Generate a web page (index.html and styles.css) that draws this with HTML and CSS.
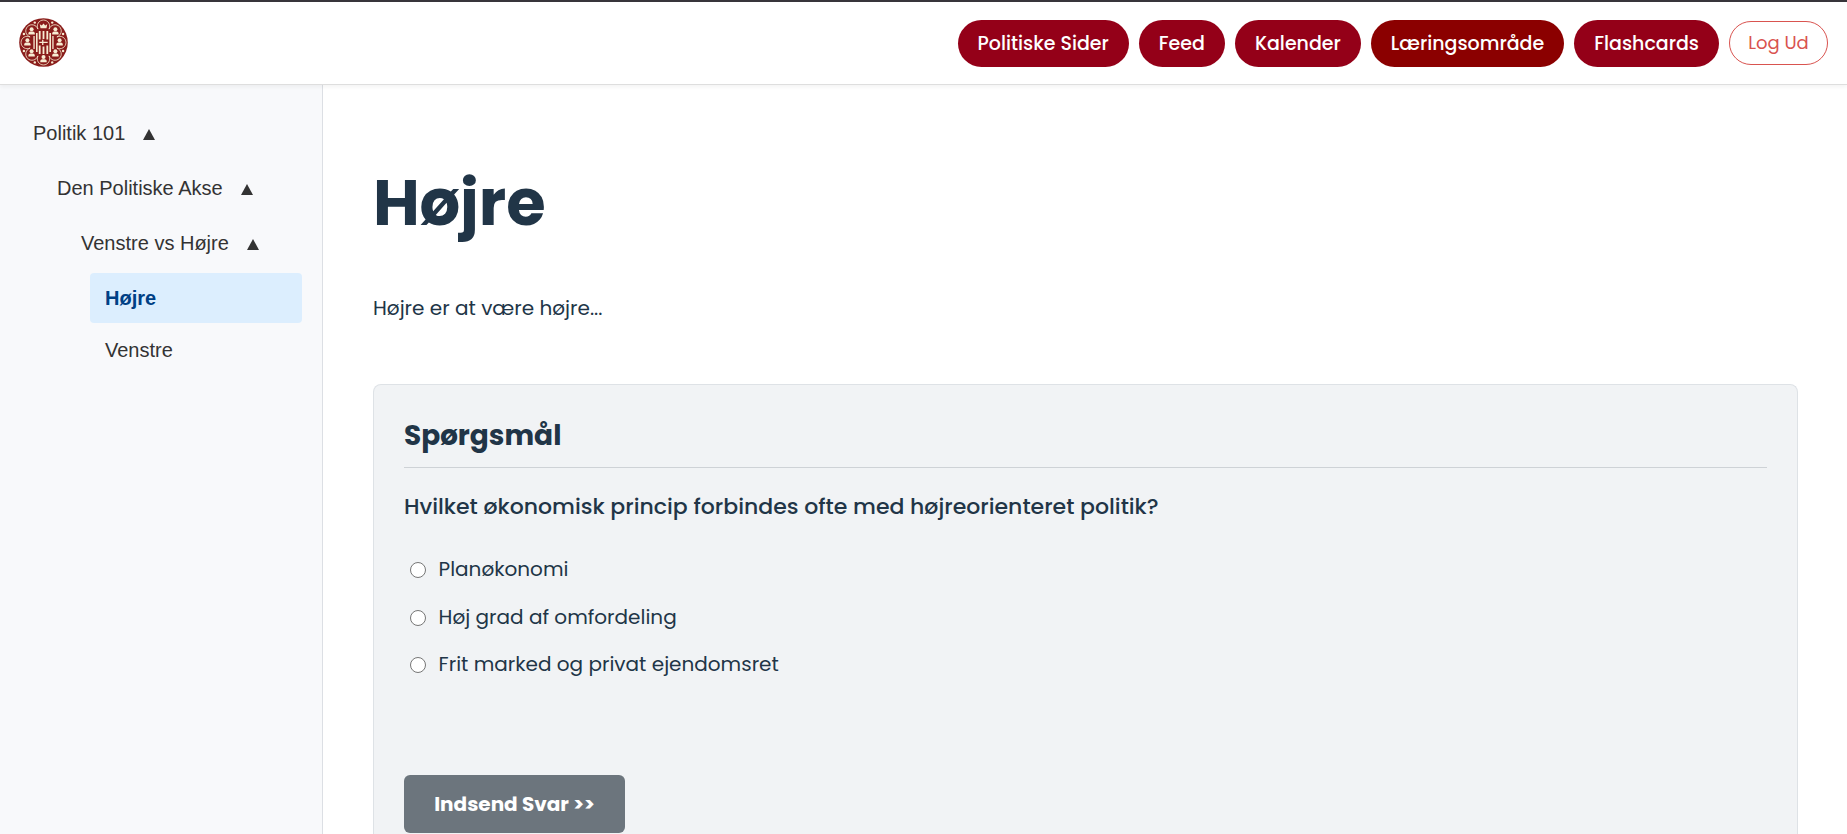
FILE: index.html
```html
<!DOCTYPE html>
<html lang="da">
<head>
<meta charset="utf-8">
<title>Læringsområde</title>
<link rel="stylesheet" href="styles.css">
</head>
<body>
<header class="topbar">
  <svg class="logo" viewBox="0 0 49 49" aria-label="Logo">
    <defs>
      <g id="person"><circle r="2" cy="-1.8"/><path d="M-3.2 3.4V2Q-2.8 .6-1.4 .4H1.4Q2.8 .6 3.2 2V3.4Z"/></g>
      <path id="foil" d="M-5.5 2.1A6.2 6.2 0 1 1 5.5 2.1"/>
    </defs>
    <circle cx="24.5" cy="24.5" r="24.3" fill="#8a1d1b"/>
    <g fill="none" stroke="#f7ecd2" stroke-width=".8">
      <use href="#foil" transform="translate(24.5 9)"/>
      <use href="#foil" transform="translate(35.5 13.5) rotate(45)"/>
      <use href="#foil" transform="translate(40 24.5) rotate(90)"/>
      <use href="#foil" transform="translate(35.5 35.5) rotate(135)"/>
      <use href="#foil" transform="translate(24.5 40) rotate(180)"/>
      <use href="#foil" transform="translate(13.5 35.5) rotate(225)"/>
      <use href="#foil" transform="translate(9 24.5) rotate(270)"/>
      <use href="#foil" transform="translate(13.5 13.5) rotate(315)"/>
    </g>
    <g fill="#f7ecd2">
      <use href="#person" x="12.6" y="13"/><use href="#person" x="36.4" y="13"/>
      <use href="#person" x="8.4" y="24"/><use href="#person" x="40.6" y="24"/>
      <use href="#person" x="12.6" y="35"/><use href="#person" x="36.4" y="35"/>
      <use href="#person" x="24.5" y="40.8"/>
      <path d="M20.8 6.2l2 1.2 1.7-2 1.7 2 2-1.2-.7 4h-6z"/>
      <circle cx="15.8" cy="4.6" r="1.2"/><circle cx="33.2" cy="4.6" r="1.2"/>
      <circle cx="4.9" cy="16" r="1.2"/><circle cx="44.1" cy="16" r="1.2"/>
      <circle cx="4.9" cy="33" r="1.2"/><circle cx="44.1" cy="33" r="1.2"/>
      <circle cx="15.8" cy="44.4" r="1.2"/><circle cx="33.2" cy="44.4" r="1.2"/>
      <path d="M14.4 18h1.3v13h-1.3zM17 15h1.6v19H17zM19.8 13h1.8v8.5h-1.8zM23.6 13h1.8v8h-1.8zM27.4 13h1.8v8.5h-1.8zM30.4 15H32v19h-1.6zM33.3 18h1.3v13h-1.3zM19.8 27.5h1.8V36h-1.8zM23.6 28.5h1.8V36h-1.8zM27.4 27.5h1.8V36h-1.8z"/>
      <path d="M20.3 23.7h2.8v-2h1.3v2h4.3v1.3h-4.3v2h-1.3v-2h-2.8z"/>
    </g>
  </svg>
  <nav class="nav">
    <a class="pill">Politiske Sider</a>
    <a class="pill">Feed</a>
    <a class="pill">Kalender</a>
    <a class="pill active">Læringsområde</a>
    <a class="pill">Flashcards</a>
    <a class="logout">Log Ud</a>
  </nav>
</header>
<div class="layout">
  <aside class="sidebar">
    <div class="node level-1">Politik 101<svg class="arrow" viewBox="0 0 12 11"><path d="M6 0L12 11H0Z"/></svg></div>
    <div class="node level-2">Den Politiske Akse<svg class="arrow" viewBox="0 0 12 11"><path d="M6 0L12 11H0Z"/></svg></div>
    <div class="node level-3">Venstre vs Højre<svg class="arrow" viewBox="0 0 12 11"><path d="M6 0L12 11H0Z"/></svg></div>
    <a class="leaf selected">Højre</a>
    <a class="leaf">Venstre</a>
  </aside>
  <main class="content">
    <h1 class="title">Højre</h1>
    <p class="intro">Højre er at være højre...</p>
    <section class="card">
      <h2 class="card-title">Spørgsmål</h2>
      <p class="question">Hvilket økonomisk princip forbindes ofte med højreorienteret politik?</p>
      <label class="option"><span class="radio"></span>Planøkonomi</label>
      <label class="option"><span class="radio"></span>Høj grad af omfordeling</label>
      <label class="option"><span class="radio"></span>Frit marked og privat ejendomsret</label>
      <button class="submit">Indsend Svar &gt;&gt;</button>
    </section>
  </main>
</div>
</body>
</html>
```
FILE: styles.css
```css
* { box-sizing: border-box; }
body {
  margin: 0;
  height: 834px;
  display: flex;
  flex-direction: column;
  background: #fff;
  color: #213547;
  font-family: Poppins, Inter, sans-serif;
}
.topbar {
  position: relative;
  flex: none;
  height: 85px;
  display: flex;
  justify-content: space-between;
  padding: 16px 19px 0;
  background: #fff;
  border-top: 2px solid #38353b;
  border-bottom: 1px solid #dedede;
  box-shadow: 0 2px 4px rgba(0, 0, 0, .05);
}
.logo { width: 49px; height: 49px; }
.nav { display: flex; gap: 10px; padding-top: 2px; }
.pill {
  height: 47px;
  padding: 0 20px;
  line-height: 47px;
  border-radius: 24px;
  background: #940018;
  color: #fff;
  font-size: 19px;
  font-weight: 500;
  white-space: nowrap;
}
.pill.active { background: #8b0000; }
.logout {
  width: 99px;
  height: 44px;
  margin-top: 1px;
  line-height: 42px;
  border: 1px solid #d9534f;
  border-radius: 22px;
  color: #d9534f;
  font-size: 18px;
  text-align: center;
}
.layout { flex: 1; display: flex; min-height: 0; }
.sidebar {
  width: 323px;
  padding: 21px 20px 0;
  background: #f8f9fb;
  border-right: 1px solid #dcdfe4;
  color: #333;
  font-family: "Liberation Sans", Arial, sans-serif;
  font-size: 20px;
}
.node { display: flex; align-items: center; height: 55px; line-height: 55px; white-space: nowrap; }
.level-1 { padding-left: 13px; }
.level-2 { padding-left: 37px; }
.level-3 { padding-left: 61px; }
.arrow { width: 12px; height: 11px; margin: 2px 0 0 18px; fill: #333; }
.leaf {
  display: block;
  height: 50px;
  line-height: 50px;
  margin: 2px 0 0 70px;
  padding-left: 15px;
  border-radius: 4px;
}
.leaf.selected { background: #dceefe; color: #004085; font-weight: 700; }
.content { flex: 1; display: flex; flex-direction: column; padding: 68px 49px 0 50px; }
.title { margin: 0; font-size: 64px; line-height: 100px; font-weight: 700; }
.intro { margin: 39px 0 0; font-size: 20px; line-height: 32px; }
.card {
  flex: 1;
  min-height: 0;
  margin-top: 60px;
  padding: 31px 30px 0;
  background: #f1f3f5;
  border: 1px solid #dee2e6;
  border-bottom: 0;
  border-radius: 8px 8px 0 0;
}
.card-title {
  margin: 0;
  height: 52px;
  border-bottom: 1px solid #ced2d6;
  font-size: 28px;
  line-height: 40px;
  font-weight: 700;
}
.question { margin: 20px 0 20.4px; font-size: 22px; line-height: 37px; font-weight: 500; }
.option { display: flex; align-items: center; height: 47.5px; padding-left: 6px; gap: 12.6px; font-size: 20px; }
.radio { width: 16px; height: 16px; margin-top: 2px; border: 1px solid #767676; border-radius: 50%; background: #fff; }
.submit {
  display: block;
  width: 221px;
  height: 58px;
  margin-top: 87.1px;
  padding: 0;
  border: 0;
  border-radius: 6px;
  background: #6c757d;
  color: #fff;
  font: inherit;
  font-size: 20px;
  font-weight: 700;
}
```
